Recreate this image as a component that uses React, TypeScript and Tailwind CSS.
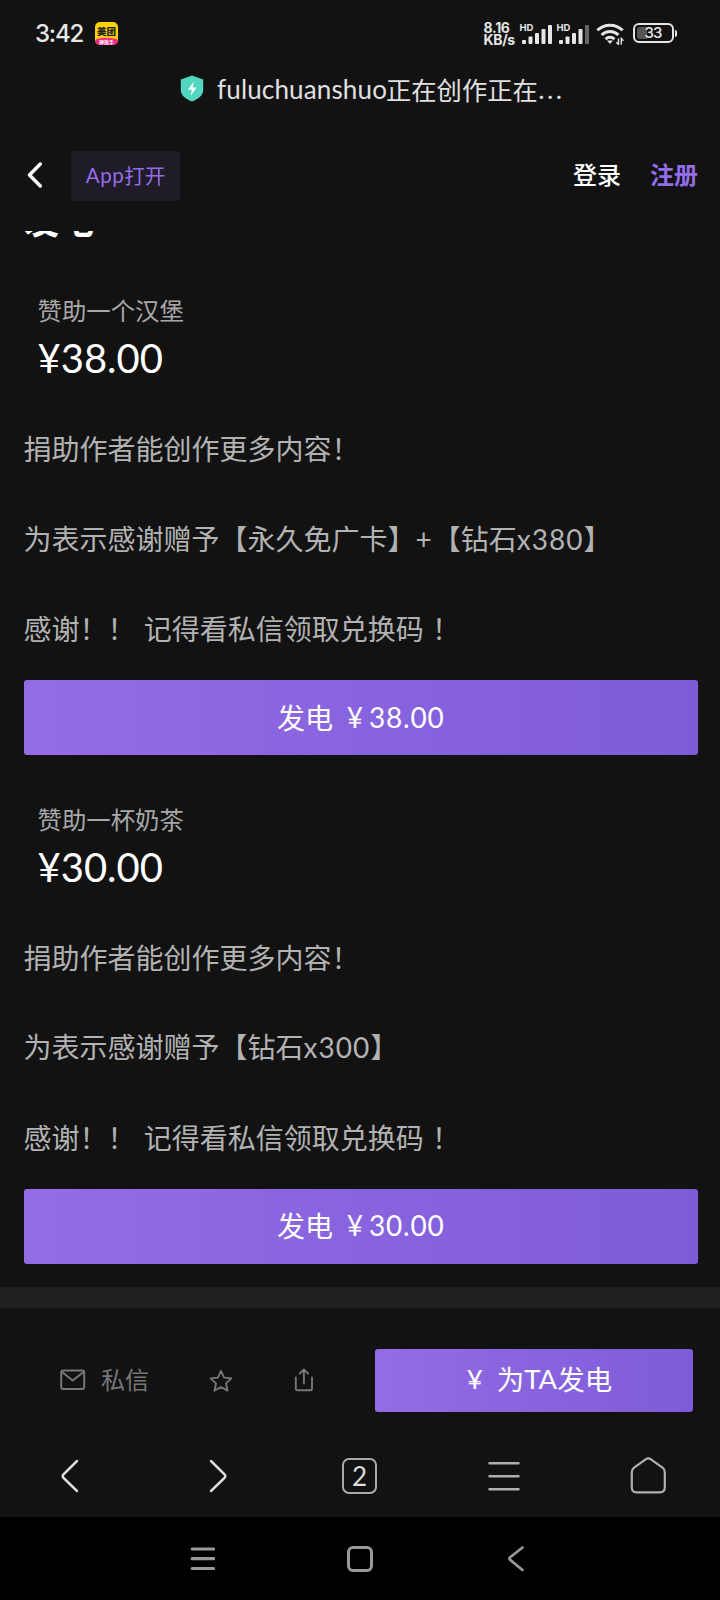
const tiers = [
  {
    name: '赞助一个汉堡',
    price: '38.00',
    reward: ['为表示感谢赠予【永久免广卡】', '+', '【钻石', 'x380', '】'],
  },
  {
    name: '赞助一杯奶茶',
    price: '30.00',
    reward: ['为表示感谢赠予【钻石', 'x300', '】'],
  },
]

const Signal = ({ weak = false }: { weak?: boolean }) => (
  <div className="relative h-[22px] w-[32px]">
    <span className="absolute -left-px top-0 text-[9.5px] leading-[10px] font-bold font-[Inter]">HD</span>
    <svg viewBox="0 0 32 22" className="h-[22px] w-[32px]" fill="#e6e6e6">
      <rect x="1" y="17" width="4" height="4" rx="1" />
      <rect x="7.5" y="13.5" width="4" height="7.5" rx="1" />
      <rect x="14" y="10" width="4" height="11" rx="1" />
      <rect x="20.5" y="6" width="4" height="15" rx="1" />
      <rect x="27" y="2" width="4" height="19" rx="1" fill={weak ? '#666' : '#e6e6e6'} />
    </svg>
  </div>
)

const StatusBar = () => (
  <div className="flex h-[66px] items-center pl-[35px] pr-[43px] text-[#e6e6e6]">
    <span className="mt-px w-[60px] text-[24px] tracking-[-1.2px] font-medium font-[Inter]">3:42</span>
    <div className="mt-px flex h-[23px] w-[23px] flex-col overflow-hidden rounded-[5px] bg-[#ffd100] text-center">
      <span className="-mx-1 mt-[2px] h-[14px] text-[9.5px] leading-[14px] font-black text-[#222]">美团</span>
      <span className="h-[7px] rounded-t-[40%] bg-[#f5258a] text-[5px] leading-[7px] font-bold text-white">神抢手</span>
    </div>
    <div className="ml-auto mt-[2px] w-[37px] text-[14px] leading-[12.5px] tracking-[-0.3px] font-bold font-[Inter]">
      <p>8.16</p>
      <p>KB/s</p>
    </div>
    <div className="mt-px flex">
      <Signal />
      <div className="w-[5px]" />
      <Signal weak />
    </div>
    <svg viewBox="0 0 30 22" className="ml-[6px] mt-px h-[22px] w-[30px]" fill="none" stroke="#e6e6e6" strokeWidth="3">
      <path d="M1.3 7.3a18.2 18.2 0 0 1 25.4 0" />
      <path d="M5.6 12a12 12 0 0 1 16.8 0" />
      <path d="M9.6 16.2a6.2 6.2 0 0 1 8.8 0" />
      <path d="M11 17.5h6L14 21z" fill="#e6e6e6" stroke="none" />
      <path d="M22.5 15.5v6l-2.2-2.2M25.3 21.5v-6l2.2 2.2" strokeWidth="1.4" />
    </svg>
    <div className="ml-[7px] flex items-center">
      <div className="relative h-[20px] w-[41px] rounded-[6px] border-2 border-[#e6e6e6] text-center text-[15px] leading-[16px] font-medium tracking-[-0.8px] font-[Inter]">
        <span className="absolute left-[2px] top-[2px] h-[12px] w-[10px] rounded-l-[3px] bg-[#555]" />
        <span className="relative">33</span>
      </div>
      <span className="ml-[1px] h-[7px] w-[2.5px] rounded-r bg-[#e6e6e6]" />
    </div>
  </div>
)

const TitleBar = () => (
  <div className="flex h-[58px] pl-[180px] text-[#e0e0e0]">
    <svg viewBox="0 0 24 27" className="mt-[9px] h-[27px] w-[24px]">
      <path d="M12 .5 23.2 4.5V15c0 6-6 9.5-11.2 11.5C6.8 24.5.8 21 .8 15V4.5z" fill="#52d6c0" />
      <path d="M13.7 6.5 8 14.8h4l-1.3 6 6-8.300h-4z" fill="#fff" />
    </svg>
    <div className="ml-[13px] flex text-[25.3px] leading-[47px]">
      <span className="w-[169px] text-[26px] tracking-[0.15px] font-[Lato]">fuluchuanshuo</span>
      <span>正在创作正在</span>
      <span className="tracking-[1.5px] font-[Inter]">...</span>
    </div>
  </div>
)

const Header = () => (
  <header className="flex h-[107px] items-start pl-[27px] pr-[22px] pt-[27px]">
    <svg viewBox="0 0 16 26" className="mt-[11px] h-[26px] w-[16px]" fill="none" stroke="#fff" strokeWidth="3.4" strokeLinecap="round" strokeLinejoin="round">
      <path d="M13.3 2 2.5 13l10.8 11" />
    </svg>
    <button className="ml-[28px] flex h-[50px] w-[109px] items-center justify-center rounded-[3px] bg-[#1f1b27] pb-[2px] text-[20.5px] text-[#946ce6]">
      <span className="font-[Lato] tracking-[0.5px]">App</span>打开
    </button>
    <span className="ml-auto text-[24px] leading-[46px] font-medium text-white">登录</span>
    <span className="ml-[29px] text-[24px] leading-[46px] font-bold text-[#946ce6]">注册</span>
  </header>
)

const Tier = ({ tier }: { tier: (typeof tiers)[0] }) => (
  <article className="h-[508.5px] pl-[23.5px] pr-[22px]">
    <h3 className="pl-[14px] text-[24.4px] leading-[36px] text-[#a8a8a8]">{tier.name}</h3>
    <p className="mt-px h-[58px] pl-[14px] text-[40px] leading-[58px] text-white font-[Lato]">¥{tier.price}</p>
    <div className="mt-[17px] text-[28px] leading-[89.7px] [word-spacing:2px] text-[#b2b2b2]">
      <p>捐助作者能创作更多内容！</p>
      <p>
        {tier.reward.map((part) => (
          <span key={part} className={/^[x+]/.test(part) ? 'font-[Lato] tracking-[1px]' : ''}>
            {part}
          </span>
        ))}
      </p>
      <p>感谢！！ 记得看私信领取兑换码 ！</p>
    </div>
    <button className="mt-[6px] flex h-[75px] w-full items-center justify-center rounded-[3px] bg-linear-to-r from-[#946ce6] to-[#7e5bd8] pb-[2px] text-[28px] text-white">
      发电
      <span className="ml-[8px] w-[28px] text-center font-[Lato]">¥</span>
      <span className="font-[Lato] tracking-[0.8px]">{tier.price}</span>
    </button>
  </article>
)

const ActionBar = () => (
  <div className="flex h-[104px] items-center pl-[60px] pr-[27px] pb-[6px] text-[#777]">
    <svg viewBox="0 0 26 22" className="h-[22px] w-[26px]" fill="none" stroke="currentColor" strokeWidth="2" strokeLinejoin="round">
      <rect x="1.2" y="1.5" width="23" height="18.5" rx="2" />
      <path d="m2 3 10.7 8.5L23.5 3" />
    </svg>
    <span className="ml-[15px] w-[108px] pb-[3px] text-[24px] leading-[34px]">私信</span>
    <svg viewBox="0 0 24 24" className="mt-px h-[24px] w-[24px]" fill="none" stroke="currentColor" strokeWidth="1.9" strokeLinejoin="round">
      <path d="m12 1.800 3.100 6.800 7.300.800-5.400 5 1.500 7.300-6.500-3.700-6.500 3.700L7 14.400l-5.400-5 7.300-.800z" />
    </svg>
    <svg viewBox="0 0 20 24" className="ml-[61px] h-[24px] w-[20px]" fill="none" stroke="currentColor" strokeWidth="1.9" strokeLinecap="round" strokeLinejoin="round">
      <path d="M1.8 9.5V20.5a1.7 1.7 0 0 0 1.7 1.7h12.800a1.700 1.700 0 0 0 1.700-1.700V9.500M9.900 15.500V1.800M5.800 5.500l4.100-4 4.100 4" />
    </svg>
    <button className="ml-auto flex h-[63px] w-[318px] items-center justify-center rounded-[3px] bg-linear-to-r from-[#946ce6] to-[#7e5bd8] pr-[5px] pb-[2px] text-[27.5px] text-white">
      <span className="w-[46px] pl-[2px] font-[Lato]">¥</span>
      为<span className="font-[Lato]">TA</span>发电
    </button>
  </div>
)

const BrowserBar = () => (
  <nav className="flex h-[82px] items-start justify-between pl-[60px] pr-[54px] pt-[21px]">
    <svg viewBox="0 0 20 40" className="h-[40px] w-[20px]" fill="none" stroke="#ddd" strokeWidth="2.5" strokeLinecap="round">
      <path d="M17 5 3.5 18.4q-1.700 1.700 0 3.400L17 35" />
    </svg>
    <svg viewBox="0 0 20 40" className="ml-[17px] h-[40px] w-[20px]" fill="none" stroke="#ddd" strokeWidth="2.5" strokeLinecap="round">
      <path d="m3 5 13.5 13.4q1.700 1.700 0 3.400L3 35" />
    </svg>
    <div className="ml-[4px] mt-[2px] flex h-[36px] w-[35px] items-center justify-center rounded-[7px] border-2 border-[#aaa] text-[26px] text-[#ddd] font-[Lato]">
      2
    </div>
    <svg viewBox="0 0 32 40" className="h-[40px] w-[32px]" stroke="#b0b0b0" strokeWidth="2.5" strokeLinecap="round">
      <path d="M1.5 7.200h29M1.500 20.200h29M1.500 33.200h29" />
    </svg>
    <svg viewBox="0 0 36 40" className="h-[40px] w-[36px]" fill="none" stroke="#b0b0b0" strokeWidth="2.2" strokeLinejoin="round">
      <path d="M16 3.100q2.300-1.600 4.600 0L32.500 11.700q2.300 1.700 2.300 4.500V31.600q0 4.700-4.700 4.700H6.500q-4.700 0-4.700-4.700V16.200q0-2.800 2.300-4.500z" />
    </svg>
  </nav>
)

const SystemNav = () => (
  <div className="flex h-[83px] items-start gap-[132px] bg-black pl-[190px] pt-[28px]">
    <svg viewBox="0 0 26 28" className="h-[28px] w-[26px]" stroke="#999" strokeWidth="3.2" strokeLinecap="round">
      <path d="M2.200 4h21.400M2.200 13.700h21.400M2.200 23.500h21.400" />
    </svg>
    <div className="-ml-px mt-px h-[26px] w-[26px] rounded-[6px] border-3 border-[#999]" />
    <svg viewBox="0 0 20 28" className="ml-[2px] h-[28px] w-[20px]" fill="none" stroke="#999" strokeWidth="2.7" strokeLinecap="round">
      <path d="M15.500 2.500 3.200 12.300q-1.600 1.300 0 2.600L15.500 25" />
    </svg>
  </div>
)

export default function App() {
  return (
    <div lang="zh-CN" className="flex h-[1600px] w-[720px] flex-col overflow-hidden bg-[#121212] font-['Noto_Sans_CJK_SC',sans-serif]">
      <StatusBar />
      <TitleBar />
      <Header />
      <main className="h-[1100px] overflow-hidden">
        {/* section heading is scrolled almost fully under the header */}
        <div className="flex h-[61px] items-start pl-[24px]">
          <h2 className="-mt-[32px] text-[35px] leading-[40px] font-bold text-white">发电</h2>
        </div>
        {tiers.map((tier) => (
          <Tier key={tier.name} tier={tier} />
        ))}
        <div className="mt-[-22px] h-[21px] bg-[#202020]" />
      </main>
      <ActionBar />
      <BrowserBar />
      <SystemNav />
    </div>
  )
}
